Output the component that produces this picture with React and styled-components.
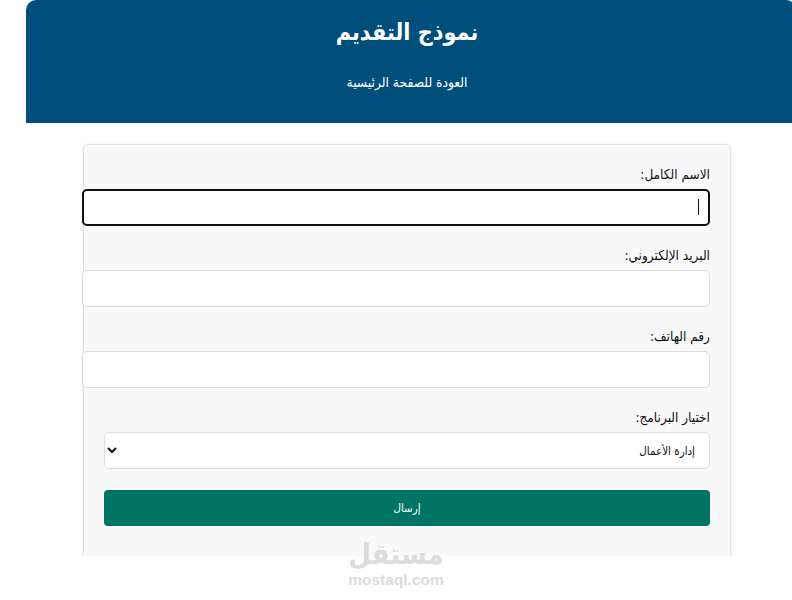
import React from 'react';
import styled, { createGlobalStyle } from 'styled-components';

const GlobalStyle = createGlobalStyle`
    html, body {
        margin: 0;
        padding: 0;
        background: #fff;
        overflow: hidden;
    }
    body {
        font-family: "DejaVu Sans Condensed", "DejaVu Sans", sans-serif;
    }
`;

const Page = styled.div`
    position: relative;
    height: 600px;
`;

const Clip = styled.div`
    height: 556px;
    padding-left: 26px;
    overflow: hidden;
    direction: rtl;
`;

const Header = styled.header`
    height: 123px;
    margin-right: -4px;
    padding: 15px 8px 0 0;
    background: #004e7c;
    border-radius: 10px 10px 0 0;
    color: #fff;
    text-align: center;
    box-sizing: border-box;
`;

const Title = styled.h1`
    margin: 0;
    font-size: 23.2px;
    line-height: 34px;
    font-weight: bold;
`;

const BackLink = styled.a`
    display: block;
    margin-top: 24px;
    font-size: 13.7px;
    line-height: 18px;
    color: #fff;
    text-decoration: none;
`;

const Card = styled.form`
    width: 648px;
    height: 460px;
    box-sizing: border-box;
    margin: 21px 61px 0 0;
    padding: 20px;
    background: #f9f9f9;
    border: 1px solid #e2e2e2;
    border-radius: 6px;
    box-shadow: 0 0 4px rgba(0, 0, 0, 0.08);
`;

const Field = styled.div`
    margin-bottom: 20px;
`;

const Label = styled.label`
    display: block;
    margin-bottom: 6px;
    font-size: 13.5px;
    line-height: 18px;
    color: #111;
`;

const InputWrap = styled.div`
    position: relative;
`;

const Input = styled.input`
    display: block;
    box-sizing: content-box;
    width: 100%;
    height: 15px;
    padding: 10px;
    background: #fff;
    border: 1px solid #ddd;
    border-radius: 5px;
    font-size: 14px;
    font-family: inherit;
    outline: ${p => (p.$focused ? '2px solid #101010' : 'none')};
    outline-offset: -2px;
    caret-color: transparent;
`;

const Caret = styled.span`
    position: absolute;
    top: 10px;
    right: 11px;
    width: 1px;
    height: 16px;
    background: #111;
`;

const Select = styled.select`
    display: block;
    width: 100%;
    height: 37px;
    padding: 0 10px;
    background: #fff;
    border: 1px solid #ddd;
    border-radius: 5px;
    font-size: 11.5px;
    font-family: inherit;
    color: #111;
`;

const Submit = styled.button`
    display: block;
    width: 100%;
    height: 36px;
    margin-top: 21px;
    background: #007566;
    border: none;
    border-radius: 4px;
    color: #fff;
    font-size: 11.5px;
    font-family: inherit;
`;

const Watermark = styled.div`
    position: absolute;
    left: 348px;
    top: 537px;
    width: 96px;
    text-align: center;
    color: #dcdcdc;
    pointer-events: none;
`;

const WatermarkWord = styled.div`
    font-size: 29px;
    line-height: 35px;
    font-weight: bold;
    direction: rtl;
`;

const WatermarkSite = styled.div`
    font-family: "Liberation Sans", sans-serif;
    font-size: 15.5px;
    line-height: 16px;
    font-weight: bold;
`;

export default function App() {
    return (
        <Page>
            <GlobalStyle />
            <Clip>
                <Header>
                    <Title>نموذج التقديم</Title>
                    <BackLink href="#">العودة للصفحة الرئيسية</BackLink>
                </Header>
                <Card>
                    <Field>
                        <Label>الاسم الكامل:</Label>
                        <InputWrap>
                            <Input type="text" $focused />
                            <Caret />
                        </InputWrap>
                    </Field>
                    <Field>
                        <Label>البريد الإلكتروني:</Label>
                        <Input type="email" />
                    </Field>
                    <Field>
                        <Label>رقم الهاتف:</Label>
                        <Input type="tel" />
                    </Field>
                    <Field>
                        <Label>اختيار البرنامج:</Label>
                        <Select defaultValue="business">
                            <option value="business">إدارة الأعمال</option>
                        </Select>
                    </Field>
                    <Submit type="button">إرسال</Submit>
                </Card>
            </Clip>
            <Watermark>
                <WatermarkWord>مستقل</WatermarkWord>
                <WatermarkSite>mostaql.com</WatermarkSite>
            </Watermark>
        </Page>
    );
}
